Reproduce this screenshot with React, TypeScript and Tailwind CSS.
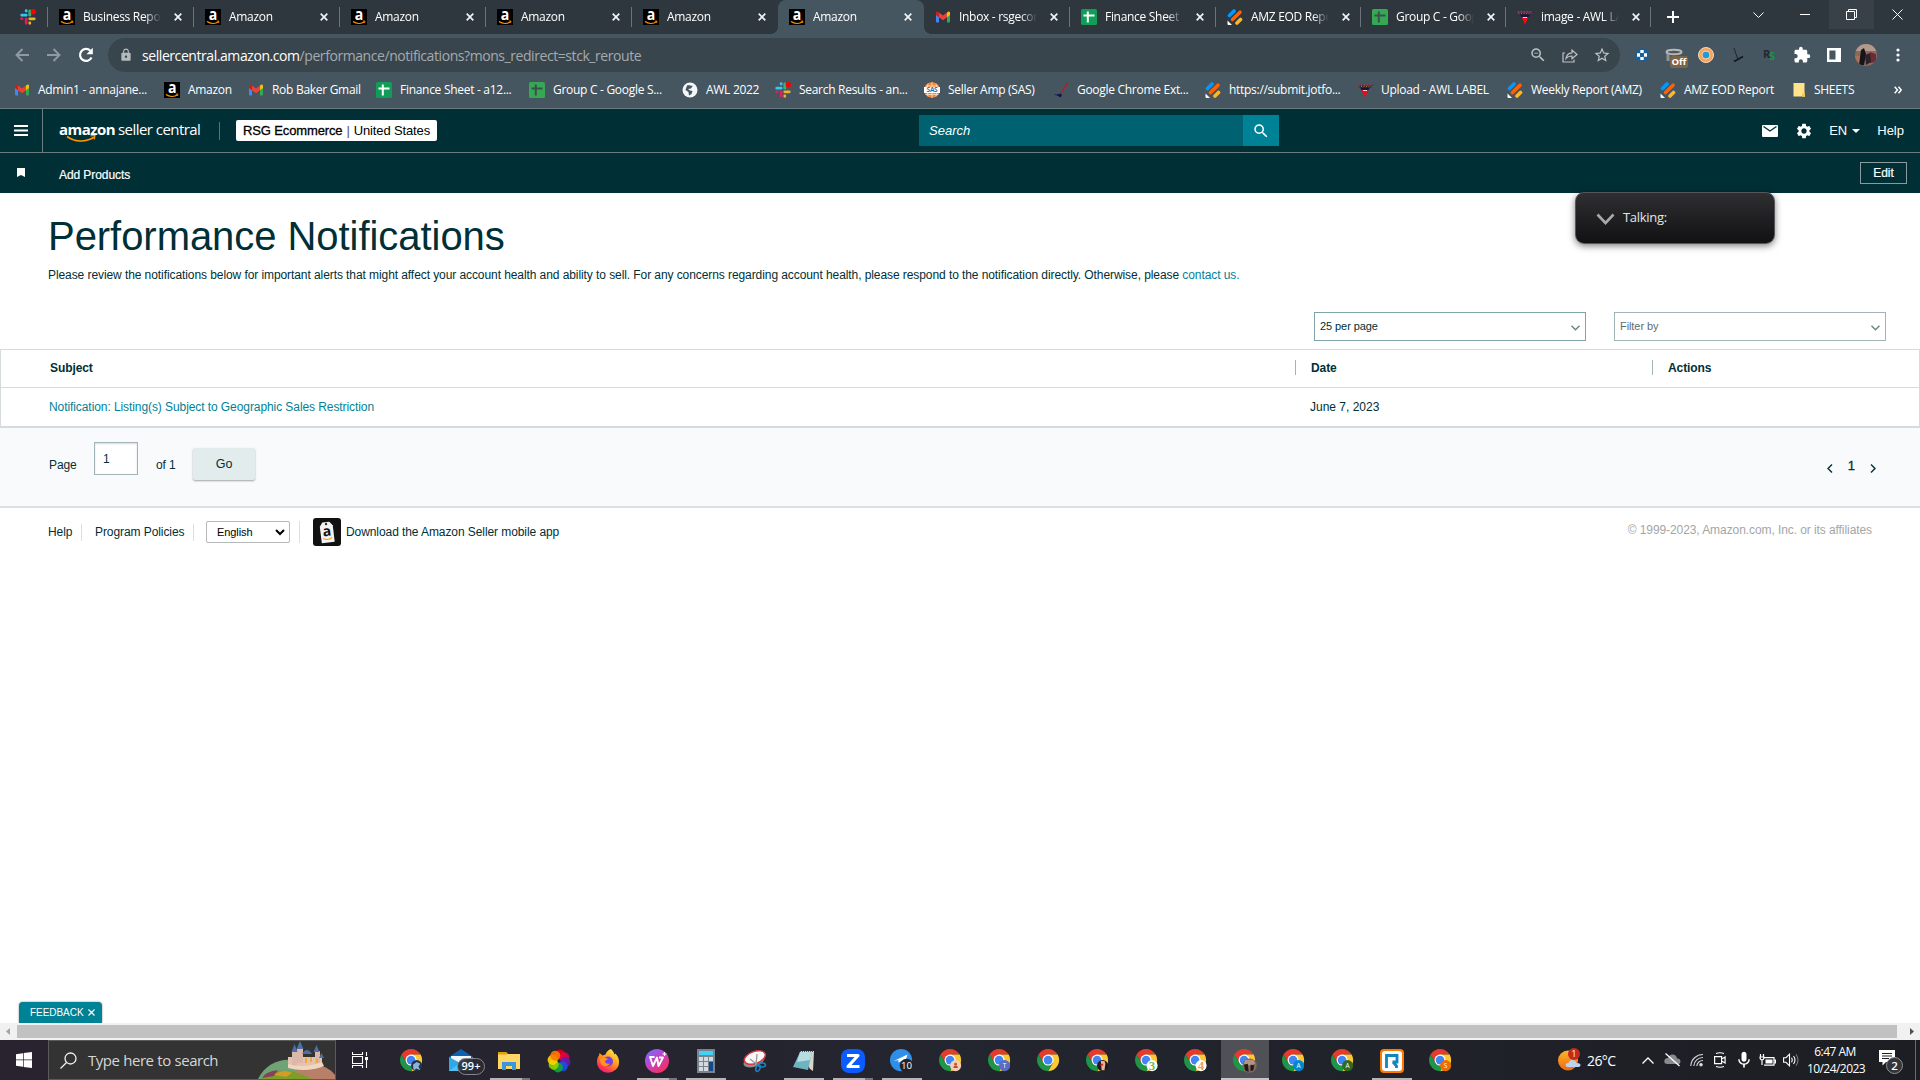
import type { ReactNode } from 'react';
import { MdExtension, MdSettings, MdLock, MdMic, MdSearch, MdStarBorder, MdZoomOut } from 'react-icons/md';

const segoe = "font-['Open_Sans',sans-serif]";

/* ---------- small brand icons ---------- */

const AmazonIcon = () => (
    <svg width="16" height="16" viewBox="0 0 16 16" className="shrink-0 overflow-visible">
        <rect width="16" height="16" fill="#000" />
        <g transform="translate(8 11) scale(.88 1)">
            <text textAnchor="middle" fontSize="16" fontWeight="700" fill="#fff" fontFamily="Open Sans">a</text>
        </g>
        <path d="M2 12.500c3.500 2.600 8.500 2.600 11.500.3" stroke="#f90" strokeWidth="1.200" fill="none" />
        <path d="M11.800 12.100l2.200-.1-.5 2" stroke="#f90" strokeWidth=".8" fill="none" />
    </svg>
);

const GmailIcon = () => (
    <svg width="16" height="16" viewBox="0 0 16 16" className="shrink-0">
        <path d="M1 4v8.500q0 1 1 1h2V6z" fill="#4285f4" />
        <path d="M15 4v8.500q0 1-1 1h-2V6z" fill="#34a853" />
        <path d="M12 3.500l1-.8q1-.6 2 .5V6l-3 2.300z" fill="#fbbc04" />
        <path d="M4 3.500l-1-.8q-1-.6-2 .5V6l3 2.300z" fill="#c5221f" />
        <path d="M4 3.500l4 3 4-3v4.800l-4 3-4-3z" fill="#ea4335" />
    </svg>
);

const SheetIcon = ({ dark = false }: { dark?: boolean }) => (
    <svg width="16" height="16" viewBox="0 0 16 16" className="shrink-0">
        <rect width="16" height="16" rx="1.500" fill={dark ? '#34a853' : '#0f9d58'} />
        <path d="M2.500 6.500h11M6.800 2.500v11" stroke={dark ? '#3c4f4d' : '#fff'} strokeWidth="2" />
    </svg>
);

const SlackIcon = () => (
    <svg width="16" height="16" viewBox="0 0 16 16" className="shrink-0" strokeWidth="2.800" strokeLinecap="round">
        <path d="M1.700 6.200h4.500M6.200 1.600v.5" stroke="#36c5f0" />
        <path d="M9.800 2v4.200" stroke="#2eb67d" />
        <path d="M9.800 9.800h4.500M9.800 13.900v.4" stroke="#ecb22e" />
        <path d="M6.200 9.800v4.500M1.600 9.800h.4" stroke="#e01e5a" />
        <circle cx="13.300" cy="2.800" r="2.700" fill="#f00" />
    </svg>
);

const JotformIcon = () => (
    <svg width="16" height="16" viewBox="0 0 16 16" className="shrink-0" strokeWidth="3.600" strokeLinecap="round">
        <path d="M2.500 6.500L7 2" stroke="#0099ff" />
        <path d="M5.500 10.500L13 3.200" stroke="#ff6100" />
        <path d="M10 14l3.500-3.500" stroke="#ffb629" />
        <path d="M.5 11.500v3.500q0 1 1 1h3.500z" fill="#fff" />
    </svg>
);

const AwlIcon = () => (
    <svg width="16" height="16" viewBox="0 0 16 16" className="shrink-0">
        <path d="M0 2.500h16l-1.500 3h-13z" fill="#3a2238" />
        <path d="M.5 3h15" stroke="#d0566f" strokeDasharray="2 1" />
        <path d="M1.500 4.500h13" stroke="#b59a3c" strokeWidth=".7" strokeDasharray="1 1.500" />
        <path d="M3 5.500h10l-2.500 4h-5z" fill="#17163f" />
        <path d="M4.500 8h7L8 15.500z" fill="#f00a14" />
        <path d="M6 8.500h4" stroke="#fff" strokeWidth=".8" />
    </svg>
);

const GlobeIcon = () => (
    <svg width="16" height="16" viewBox="0 0 16 16" className="shrink-0">
        <circle cx="8" cy="8" r="7.500" fill="#f4f6f7" />
        <path d="M5 3.500c3-1 4 1 6 0l-2 3-3 .5 2 1.500 2.500.5-1 3-2.500 1.500-.5-3.500-3-2z" fill="#455660" />
    </svg>
);

const SasIcon = () => (
    <svg width="16" height="16" viewBox="0 0 16 16" className="shrink-0 overflow-visible">
        <circle cx="8" cy="8" r="7.800" fill="#f58634" />
        <path d="M8 0v16M4 1.500q-2 6 0 13M12 1.500q2 6 0 13M1.500 4h13M1.500 12.500h13" stroke="#fde0c6" strokeWidth=".8" fill="none" />
        <rect x="0" y="5" width="16" height="6" fill="#fff" />
        <text x="8" y="10.200" textAnchor="middle" fontSize="6.500" fontWeight="700" fill="#1479b8" fontFamily="Open Sans">SAS</text>
    </svg>
);

const HockeyIcon = () => (
    <svg width="16" height="16" viewBox="0 0 16 16" className="shrink-0">
        <path d="M15 .5L7.500 12" stroke="#c4161c" strokeWidth="1.300" />
        <path d="M1 12l3 .5 3.500-1 1.500 1.500-1.500 2.500q-3-2-6-3z" fill="#15154e" />
    </svg>
);

const FolderIcon = () => (
    <svg width="13" height="16" viewBox="0 0 13 16" className="shrink-0">
        <path d="M.5 1h11v13.500h-11z" fill="#ffe38a" />
        <path d="M9 14.500v-3l3-1v4.500z" fill="#f3c94c" />
    </svg>
);

/* ---------- browser ---------- */

const tabs: { icon: ReactNode; title: string; active?: boolean; noSep?: boolean }[] = [
    { icon: <AmazonIcon />, title: 'Business Reports' },
    { icon: <AmazonIcon />, title: 'Amazon' },
    { icon: <AmazonIcon />, title: 'Amazon' },
    { icon: <AmazonIcon />, title: 'Amazon' },
    { icon: <AmazonIcon />, title: 'Amazon', noSep: true },
    { icon: <AmazonIcon />, title: 'Amazon', active: true, noSep: true },
    { icon: <GmailIcon />, title: 'Inbox - rsgecommerce' },
    { icon: <SheetIcon />, title: 'Finance Sheet - a12' },
    { icon: <JotformIcon />, title: 'AMZ EOD Report' },
    { icon: <SheetIcon dark />, title: 'Group C - Google' },
    { icon: <AwlIcon />, title: 'image - AWL LABEL' },
];

const TabClose = () => (
    <svg width="8" height="8" viewBox="0 0 8 8" className="shrink-0">
        <path d="M.7.7l6.600 6.600M7.300.7L.7 7.300" stroke="#f1f3f4" strokeWidth="1.700" />
    </svg>
);

const TabStrip = () => (
    <div className="flex h-[34px] shrink-0 bg-[#2d373d] text-white">
        <div className="flex w-12 items-center pl-5">
            <SlackIcon />
            <div className="ml-[11px] h-5 w-px bg-[#69757b]" />
        </div>
        {tabs.map((tab, i) => (
            <div key={i} className={`relative flex shrink-0 items-center pl-[11px] ${i < 8 ? 'w-[146px]' : 'w-[145px]'} ${tab.active ? 'rounded-t-lg bg-[#455660]' : ''}`}>
                {tab.active && (
                    <>
                        <div className="absolute bottom-0 -left-2 size-2 bg-[radial-gradient(circle_at_0_0,transparent_8px,#455660_8px)]" />
                        <div className="absolute -right-2 bottom-0 size-2 bg-[radial-gradient(circle_at_100%_0,transparent_8px,#455660_8px)]" />
                    </>
                )}
                {tab.icon}
                <span className="ml-2 w-[79px] overflow-hidden text-[12px] tracking-[-0.300px] whitespace-nowrap [mask-image:linear-gradient(to_right,#000_62px,transparent_78px)]">
                    {tab.title}
                </span>
                <span className="ml-[12px]"><TabClose /></span>
                {!tab.noSep && <div className="ml-auto h-5 w-px bg-[#69757b]" />}
            </div>
        ))}
        <div className="ml-4 flex items-center">
            <svg width="12" height="12" viewBox="0 0 12 12"><path d="M6 0v12M0 6h12" stroke="#fff" strokeWidth="2" /></svg>
        </div>
        <div className="ml-auto flex h-[29px]">
            <div className="flex w-[45px] items-center justify-center">
                <svg width="11" height="6" viewBox="0 0 11 6"><path d="M.5.5l5 5 5-5" stroke="#fff" fill="none" /></svg>
            </div>
            <div className="flex w-[48px] items-center justify-center">
                <div className="h-px w-[10px] bg-white" />
            </div>
            <div className="flex w-[45px] items-center justify-center bg-[#374147]">
                <svg width="11" height="11" viewBox="0 0 11 11"><path d="M.5 2.500h8v8h-8zM2.500 2.500v-2h8v8h-2" stroke="#fff" fill="none" /></svg>
            </div>
            <div className="flex w-[46px] items-center justify-center">
                <svg width="11" height="11" viewBox="0 0 11 11"><path d="M.5.5l10 10M10.500.5l-10 10" stroke="#fff" fill="none" /></svg>
            </div>
        </div>
    </div>
);

const extensions: ReactNode[] = [
    <svg width="16" height="16" viewBox="0 0 16 16">
        <circle cx="8" cy="8" r="7" fill="#1b5f94" />
        <path d="M8 3v3M8 10v3M3 8h3M10 8h3" stroke="#fff" strokeWidth="3.400" />
    </svg>,
    <div className="relative h-[18px] w-[18px]">
        <svg width="18" height="18" viewBox="0 0 18 18">
            <ellipse cx="9" cy="6" rx="7.500" ry="2.300" stroke="#b4b8ba" strokeWidth="2" fill="#555" />
            <path d="M3 8v7" stroke="#8d9497" strokeWidth="3" />
        </svg>
        <span className="absolute top-[10px] left-[5px] flex h-3 w-[18px] items-center justify-center rounded-[2px] bg-[#7d6347] text-[9.500px] leading-3 font-bold text-white">Off</span>
    </div>,
    <svg width="16" height="16" viewBox="0 0 16 16">
        <circle cx="8" cy="8" r="7.500" fill="#f7a35c" stroke="#fbd9b8" />
        <circle cx="8" cy="8" r="4.500" fill="#f9c79c" />
        <circle cx="8" cy="8" r="3.300" fill="#1b9ddb" />
    </svg>,
    <svg width="16" height="16" viewBox="0 0 16 16">
        <path d="M4 1l4 12" stroke="#20262a" />
        <path d="M4 14.500l9-5" stroke="#15191c" strokeWidth="2" />
    </svg>,
    <svg width="16" height="16" viewBox="0 0 16 16" className="overflow-visible">
        <text x="1" y="11" fontSize="11" fontWeight="700" fill="#22282c" fontFamily="Open Sans">R</text>
        <text x="7.500" y="13" fontSize="10" fontWeight="700" fill="#129a40" fontFamily="Open Sans">S</text>
    </svg>,
    <MdExtension size={18} />,
    <svg width="14" height="14" viewBox="0 0 14 14"><path d="M1.200 1.200h11.600v11.600H1.200z" fill="none" stroke="#fff" strokeWidth="2.400" /><path d="M8.500 1h4.500v12H8.500z" fill="#fff" /></svg>,
    <svg width="22" height="22" viewBox="0 0 22 22">
        <defs><clipPath id="av"><circle cx="11" cy="11" r="11" /></clipPath></defs>
        <g clipPath="url(#av)">
            <rect width="22" height="22" fill="#8a6a5c" />
            <path d="M0 0h22v7H0z" fill="#b49a8d" />
            <path d="M0 12h5l2 10H0z" fill="#a8735a" />
            <path d="M6 6l3-2 2 6-2 11H4z" fill="#17141a" />
            <path d="M15 8l6 2v8l-6 1z" fill="#6d2a38" />
            <path d="M10 11l5-2 1 9-5 3z" fill="#2c2326" />
        </g>
    </svg>,
    <svg width="4" height="14" viewBox="0 0 4 14" fill="#fff"><circle cx="2" cy="2" r="1.600" /><circle cx="2" cy="7" r="1.600" /><circle cx="2" cy="12" r="1.600" /></svg>,
];

const AddressBar = () => (
    <div className="flex h-[42px] shrink-0 items-center bg-[#455660] text-white">
        <div className="flex w-[108px] items-center pl-[15px]">
            <svg width="14" height="14" viewBox="0 0 14 14" stroke="#909ba1" strokeWidth="1.900" fill="none"><path d="M14 7H1.500M7.500 1L1.500 7l6 6" /></svg>
            <svg width="14" height="14" viewBox="0 0 14 14" stroke="#909ba1" strokeWidth="1.900" fill="none" className="ml-[18px]"><path d="M0 7h12.500M6.500 1l6 6-6 6" /></svg>
            <svg width="16" height="16" viewBox="0 0 16 16" className="ml-[17px]">
                <path d="M13.500 10.500A6 6 0 1 1 12.300 3.700" stroke="#fff" strokeWidth="2.200" fill="none" />
                <path d="M14.800.8v6.400H8.500z" fill="#fff" />
            </svg>
        </div>
        <div className="flex h-[34px] w-[1512px] items-center rounded-full bg-[#39454c] pr-[9px] pl-[11px]">
            <MdLock size={14} className="text-[#b3babd]" />
            <span className="ml-[9px] text-[14px] tracking-[-0.430px] whitespace-nowrap text-[#a4abaf]">
                <span className="text-white">sellercentral.amazon.com</span>/performance/notifications?mons_redirect=stck_reroute
            </span>
            <div className="ml-auto flex items-center text-[#bcc2c5]">
                <MdZoomOut size={18} />
                <svg width="16" height="16" viewBox="0 0 16 16" fill="none" stroke="currentColor" strokeWidth="1.200" className="ml-[15px]">
                    <path d="M3 6H1v9h11v-2.500M4 11.500c.5-4 3-5.500 6-5.700V3l5 4.500-5 4.200V9C7.500 9 5.500 9.600 4 11.500z" />
                </svg>
                <MdStarBorder size={18} className="ml-[15px]" />
            </div>
        </div>
        <div className="ml-[6px] flex">
            {extensions.map((icon, i) => (
                <div key={i} className="flex w-8 items-center justify-center">{icon}</div>
            ))}
        </div>
    </div>
);

const bookmarks: { icon: ReactNode; title: string; width: string }[] = [
    { icon: <GmailIcon />, title: 'Admin1 - annajane...', width: 'w-[150px]' },
    { icon: <AmazonIcon />, title: 'Amazon', width: 'w-[84px]' },
    { icon: <GmailIcon />, title: 'Rob Baker Gmail', width: 'w-[128px]' },
    { icon: <SheetIcon />, title: 'Finance Sheet - a12...', width: 'w-[153px]' },
    { icon: <SheetIcon dark />, title: 'Group C - Google S...', width: 'w-[153px]' },
    { icon: <GlobeIcon />, title: 'AWL 2022', width: 'w-[93px]' },
    { icon: <SlackIcon />, title: 'Search Results - an...', width: 'w-[149px]' },
    { icon: <SasIcon />, title: 'Seller Amp (SAS)', width: 'w-[129px]' },
    { icon: <HockeyIcon />, title: 'Google Chrome Ext...', width: 'w-[152px]' },
    { icon: <JotformIcon />, title: 'https://submit.jotfo...', width: 'w-[152px]' },
    { icon: <AwlIcon />, title: 'Upload - AWL LABEL', width: 'w-[150px]' },
    { icon: <JotformIcon />, title: 'Weekly Report (AMZ)', width: 'w-[153px]' },
    { icon: <JotformIcon />, title: 'AMZ EOD Report', width: 'w-[133px]' },
    { icon: <FolderIcon />, title: 'SHEETS', width: 'w-[96px]' },
];

const BookmarkBar = () => (
    <div className="flex h-8 shrink-0 items-center bg-[#455660] pb-[4px] pl-[14px] text-[12px] tracking-[-0.290px] text-white">
        {bookmarks.map((b) => (
            <div key={b.title} className={`flex shrink-0 items-center gap-2 whitespace-nowrap ${b.width}`}>
                {b.icon}
                <span>{b.title}</span>
            </div>
        ))}
        <svg width="8" height="8" viewBox="0 0 8 8" fill="none" stroke="#fff" strokeWidth="1.500" className="ml-[5px]">
            <path d="M.7.7L3.500 4 .7 7.300M4.500.7L7.300 4 4.500 7.300" />
        </svg>
    </div>
);

/* ---------- seller central ---------- */

const SellerHeader = () => (
    <header className="shrink-0 bg-[#002f36] text-white">
        <div className="flex h-[45px] items-center border-t border-b border-[#6b7d81]">
            <div className="flex h-full w-[43px] items-center border-r border-[#6b7d81] pl-[14px]">
                <svg width="14" height="11" viewBox="0 0 14 11"><path d="M0 1h14M0 5.500h14M0 10h14" stroke="#fff" strokeWidth="1.800" /></svg>
            </div>
            <div className={`relative ml-4 flex w-[143px] items-baseline pb-1 leading-5 whitespace-nowrap ${segoe}`}>
                <span className="w-[59px] text-[15px] font-bold tracking-[-0.550px]">amazon</span>
                <span className="text-[15px] tracking-[-0.550px]">seller central</span>
                <svg width="31" height="8" viewBox="0 0 31 8" className="absolute top-[16px] left-[7px]" fill="none" stroke="#f90">
                    <path d="M1 1.500c8 5.500 18 6 27 .8" strokeWidth="1.600" />
                    <path d="M24.500.8l4.500-.3-.8 4" strokeWidth="1.200" />
                </svg>
            </div>
            <div className="ml-[17px] h-[18px] w-px bg-[#5c7377]" />
            <div className="ml-4 flex h-[21px] w-[201px] items-center rounded-[2px] bg-white pl-[7px] text-[13px] tracking-[-0.130px] whitespace-nowrap text-black">
                <span className="[-webkit-text-stroke:0.300px_#000]">RSG Ecommerce</span>
                <span className="mx-[4px] text-[#555]">|</span>
                <span>United States</span>
            </div>
            <div className="ml-[482px] flex h-[31px]">
                <div className="flex w-[324px] items-center bg-[#006170] pl-[10px] text-[13px] italic">Search</div>
                <div className="flex w-9 items-center justify-center bg-[#008296]">
                    <MdSearch size={18} />
                </div>
            </div>
            <div className="ml-auto flex items-center text-[13px]">
                <svg width="16" height="12" viewBox="0 0 16 12">
                    <rect width="16" height="12" rx="1" fill="#fff" />
                    <path d="M1.500 1.500L8 6l6.500-4.500" stroke="#002f36" strokeWidth="1.400" fill="none" />
                </svg>
                <MdSettings size={18} className="ml-[17px]" />
                <span className="ml-[16px]">EN</span>
                <svg width="8" height="4" viewBox="0 0 8 4" className="ml-[5px]"><path d="M0 0h8L4 4z" fill="#fff" /></svg>
                <span className="mr-4 ml-[17px]">Help</span>
            </div>
        </div>
        <div className="flex h-10 items-center">
            <svg width="8" height="9" viewBox="0 0 8 9" className="mb-[2px] ml-[17px]"><path d="M0 0h8v9L4 7 0 9z" fill="#fff" /></svg>
            <span className="mt-[3px] ml-[34px] text-[12px] tracking-[-0.080px] [-webkit-text-stroke:0.200px_#fff]">Add Products</span>
            <div className="mr-[13px] ml-auto flex h-[22px] w-[47px] items-center justify-center border border-[#8b9a9d] text-[12px] [-webkit-text-stroke:0.200px_#fff]">Edit</div>
        </div>
    </header>
);

const SelectBox = ({ label, className }: { label: string; className: string }) => (
    <div className={`flex h-[29px] w-[272px] items-center justify-between border bg-white pr-[5px] pl-[5px] text-[11px] ${className}`}>
        <span>{label}</span>
        <svg width="9" height="6" viewBox="0 0 9 6" className="mt-[2px]"><path d="M.5.7l4 4 4-4" stroke="#6f8185" strokeWidth="1.400" fill="none" /></svg>
    </div>
);

const Notifications = () => (
    <main className="shrink-0 text-[12px] tracking-[-0.080px] text-[#002f36]">
        <div className="h-[119px] pt-[20px] pl-12">
            <h1 className="text-[40px] leading-[46px] tracking-[-0.050px]">Performance Notifications</h1>
            <p className="mt-[9px] leading-[14px]">
                Please review the notifications below for important alerts that might affect your account health and ability to sell. For any concerns regarding account health, please respond to the notification directly. Otherwise, please <a className="text-[#008296]">contact us.</a>
            </p>
        </div>
        <div className="flex h-[37px] justify-end gap-7 pr-[34px]">
            <SelectBox label="25 per page" className="border-[#7fa5ab]" />
            <SelectBox label="Filter by" className="border-[#a2b4b7] text-[#5f6d70]" />
        </div>
        <div className="border border-b-2 border-[#d5dbdd]">
            <div className="flex h-[38px] items-center border-b border-[#d5dbdd] pb-[2px] font-bold">
                <div className="w-[1294px] pl-[49px]">Subject</div>
                <div className="flex w-[357px] items-center"><span className="mr-[15px] h-[15px] w-px bg-[#a2b4b7]" />Date</div>
                <div className="flex items-center"><span className="mr-[15px] h-[15px] w-px bg-[#a2b4b7]" />Actions</div>
            </div>
            <div className="flex h-[38px] items-center">
                <a className="w-[1309px] pl-12 text-[#008296]">Notification: Listing(s) Subject to Geographic Sales Restriction</a>
                <span className="tracking-normal">June 7, 2023</span>
            </div>
        </div>
        <div className="flex h-[80px] items-start border-b-2 border-[#dde1e4] bg-[#f9fafc] pl-[49px]">
            <span className="mt-[30px] w-[45px] leading-[14px]">Page</span>
            <div className="mt-[14px] flex h-[33px] w-11 items-center border border-[#a2b4b7] bg-white pl-[8px] shadow-[inset_0_1px_2px_rgba(0,0,0,0.15)]">1</div>
            <span className="mt-[30px] ml-[18px] w-[37px] leading-[14px]">of 1</span>
            <button className="mt-[20px] h-8 w-[62px] rounded-[2px] bg-[#e3eced] text-[12.500px] shadow-[0_1px_2px_rgba(0,0,0,0.35)]">Go</button>
            <div className="mt-[30px] mr-[44px] ml-auto flex items-center leading-[16px]">
                <svg width="6" height="9" viewBox="0 0 6 9" className="mt-[4px]"><path d="M5 .5l-4 4 4 4" stroke="#002f36" strokeWidth="1.400" fill="none" /></svg>
                <span className="mx-[15px] text-[13px] [-webkit-text-stroke:0.300px_#002f36]">1</span>
                <svg width="6" height="9" viewBox="0 0 6 9" className="mt-[4px]"><path d="M1 .5l4 4-4 4" stroke="#002f36" strokeWidth="1.400" fill="none" /></svg>
            </div>
        </div>
        <footer className="flex h-[48px] items-center pl-12">
            <span className="w-[33px]">Help</span>
            <span className="h-[17px] w-px bg-[#dcdfe0]" />
            <span className="w-[111px] pl-[13px] whitespace-nowrap">Program Policies</span>
            <span className="h-[17px] w-px bg-[#dcdfe0]" />
            <div className="ml-3 flex h-[22px] w-[84px] items-center justify-between rounded-[2px] border border-[#b5b9ba] pr-[4px] pl-[10px] text-[11px] text-black">
                English
                <svg width="10" height="7" viewBox="0 0 10 7"><path d="M1 1l4 4 4-4" stroke="#000" strokeWidth="2" fill="none" /></svg>
            </div>
            <span className="ml-[9px] h-[22px] w-px bg-[#dcdfe0]" />
            <svg width="28" height="28" viewBox="0 0 28 28" className="ml-[13px]">
                <rect width="28" height="28" rx="3" fill="#111" />
                <g transform="rotate(-7 14 14)">
                    <path d="M10.500 4h7L20.500 8v16.500h-13V8z" fill="#f4f4f4" />
                    <circle cx="14" cy="6" r="1.200" fill="#333" />
                    <text x="14" y="18" textAnchor="middle" fontSize="14" fontWeight="700" fill="#111" fontFamily="Open Sans">a</text>
                    <path d="M9.500 20q4.500 3 9 0" stroke="#f90" strokeWidth="1.200" fill="none" />
                </g>
            </svg>
            <span className="ml-[5px]">Download the Amazon Seller mobile app</span>
            <span className="mr-12 mb-[5px] ml-auto text-[#a3a6a7]">© 1999-2023, Amazon.com, Inc. or its affiliates</span>
        </footer>
    </main>
);

const TalkingPanel = () => (
    <div className={`absolute top-[192px] left-[1575px] flex h-[52px] w-[200px] items-center rounded-[9px] border border-[#55555a] bg-linear-to-b from-[#2f2f32] to-[#121214] pl-5 text-[13px] text-[#e4e4e4] shadow-[0_2px_7px_rgba(0,0,0,0.5)] ${segoe}`}>
        <svg width="19" height="12" viewBox="0 0 19 12" className="mt-[2px]"><path d="M1.500 1.500l8 8.500 8-8.500" stroke="#a8a8aa" strokeWidth="2.600" fill="none" /></svg>
        <span className="ml-2 tracking-[-0.300px]">Talking:</span>
    </div>
);

/* ---------- taskbar ---------- */

const ChromeIcon = ({ children }: { children?: ReactNode }) => (
    <svg width="26" height="26" viewBox="0 0 26 26">
        <path d="M12 12V6h10.390A12 12 0 0 0 1.610 6L6.800 15z" fill="#e33b2e" />
        <path d="M12 12l5.200 3L12 24A12 12 0 0 0 22.390 6H12z" fill="#fcc934" />
        <path d="M12 12l-5.200 3L1.610 6A12 12 0 0 0 12 24l5.200-9z" fill="#1e9547" />
        <circle cx="12" cy="12" r="6" fill="#fff" />
        <circle cx="12" cy="12" r="4.700" fill="#4285f4" />
        {children}
    </svg>
);

const Badge = ({ color, letter }: { color: string; letter: string }) => (
    <ChromeIcon>
        <circle cx="18" cy="18" r="6" fill={color} />
        <text x="18" y="20.600" textAnchor="middle" fontSize="7" fill="#fff" fontFamily="Open Sans">{letter}</text>
    </ChromeIcon>
);

const NumberBadge = ({ color, digit }: { color: string; digit: string }) => (
    <ChromeIcon>
        <circle cx="18.500" cy="18" r="6" fill="#fff" />
        <text x="18.500" y="22.700" textAnchor="middle" fontSize="14" fontWeight="700" fill={color} fontFamily="Liberation Serif">{digit}</text>
    </ChromeIcon>
);

const petals = ['#e8000d', '#e5004f', '#5a1fb0', '#1f4fe0', '#13a538', '#8fd400', '#ffd400', '#ff7a00'];

const apps: { icon: ReactNode; line?: 'full' | 'stack' | 'active' }[] = [
    {
        icon: (
            <ChromeIcon>
                <circle cx="18" cy="18" r="6" fill="#20344f" />
                <path d="M14 17l4-3 4 2-2 3 2 4-4-2-3 2z" fill="#8fb0d8" />
                <path d="M14 21l3-2 3 3" stroke="#d8b35a" fill="none" />
            </ChromeIcon>
        ),
    },
    {
        icon: (
            <div className="relative h-[26px] w-6">
                <svg width="24" height="26" viewBox="0 0 24 26">
                    <path d="M0 9l12-8 12 8v13H0z" fill="#0d63b0" />
                    <path d="M2 8h20v9H2z" fill="#f3f7fb" />
                    <path d="M0 9l12 6.500L24 9v14H0z" fill="#2fa8ea" />
                    <path d="M0 23L12 14l12 9z" fill="#50c0f5" />
                </svg>
                <span className="absolute top-[10px] left-[8px] flex h-[17px] w-7 items-center justify-center rounded-full border border-[#85878c] bg-[#2b2c33]/90 text-[11px] leading-4 font-semibold text-white">99+</span>
            </div>
        ),
    },
    {
        icon: (
            <svg width="22" height="20" viewBox="0 0 22 20">
                <path d="M0 1h8l2 2h12v15H0z" fill="#ffd766" />
                <path d="M0 1h8l1.500 2.500H0z" fill="#e0a106" />
                <path d="M4 11h14v8h-4v-4H8v4H4z" fill="#3b97dd" />
            </svg>
        ),
        line: 'stack',
    },
    {
        icon: (
            <svg width="24" height="24" viewBox="0 0 24 24">
                {petals.map((color, i) => (
                    <circle key={color} cx="12" cy="5.500" r="5" fill={color} fillOpacity=".9" transform={`rotate(${i * 45 + 10} 12 12)`} />
                ))}
            </svg>
        ),
    },
    {
        icon: (
            <svg width="24" height="24" viewBox="0 0 24 24">
                <defs>
                    <linearGradient id="fox" x1=".8" y1="0" x2=".2" y2="1">
                        <stop offset="0" stopColor="#fff044" />
                        <stop offset=".45" stopColor="#ff9a1f" />
                        <stop offset=".8" stopColor="#ff3750" />
                        <stop offset="1" stopColor="#e31587" />
                    </linearGradient>
                </defs>
                <path d="M15 0c2 2 3 3.500 3.300 5.500l1-1C22 7 23.300 10 23 13.500A11 10.500 0 0 1 1 13c0-3 .8-5 2-6.500L3.500 4l3 2.500 3-1c1-3 3-4.500 5.500-5.500z" fill="url(#fox)" />
                <circle cx="12" cy="12.500" r="5" fill="#7542e5" />
                <path d="M4 9.500c3-2 6-1 8 .5l-3 2c0 2 2 3.500 5 2.500-2 3.500-8 4-9.500-1z" fill="#ff9421" />
            </svg>
        ),
    },
    {
        icon: (
            <svg width="24" height="24" viewBox="0 0 24 24">
                <defs>
                    <linearGradient id="wps" x1="0" y1="0" x2=".8" y2="1">
                        <stop offset="0" stopColor="#5b7bff" />
                        <stop offset=".4" stopColor="#b34bd6" />
                        <stop offset="1" stopColor="#ff2a55" />
                    </linearGradient>
                </defs>
                <circle cx="12" cy="12" r="12" fill="url(#wps)" />
                <path d="M9.500 8H5l3 9L12 8.500l1.500 8.500L18 8.500h-4" stroke="#fff" strokeWidth="1.900" fill="none" strokeLinejoin="round" />
                <path d="M19.500 3v4M17.500 5h4" stroke="#fff" strokeWidth="1.200" />
            </svg>
        ),
        line: 'stack',
    },
    {
        icon: (
            <svg width="18" height="24" viewBox="0 0 18 24" className="ml-[3px]">
                <rect width="18" height="24" fill="#78838c" />
                <rect x="2" y="2" width="14" height="4" fill="#3fd3fb" />
                <path d="M2 8h4v4H2zM7 8h4v4H7zM12 8h4v4h-4zM2 13h4v4H2zM7 13h4v4H7zM2 18h4v4H2zM7 18h4v4H7z" fill="#d5dade" />
                <path d="M12 13h4v9h-4z" fill="#124a8d" />
            </svg>
        ),
        line: 'full',
    },
    {
        icon: (
            <svg width="24" height="24" viewBox="0 0 24 24">
                <ellipse cx="11" cy="12" rx="11" ry="5.500" fill="#8d9094" transform="rotate(-20 11 12)" />
                <ellipse cx="12" cy="8.500" rx="11" ry="6" fill="#f8f8f8" stroke="#d9363e" strokeWidth="1.500" transform="rotate(-20 12 9)" />
                <path d="M14 5l-1 11M7 10l9 7" stroke="#999" strokeWidth="1.300" />
                <ellipse cx="19" cy="16" rx="3.500" ry="2" stroke="#1784c7" strokeWidth="1.600" fill="none" />
                <ellipse cx="15" cy="19" rx="2" ry="3.500" stroke="#1784c7" strokeWidth="1.600" fill="none" transform="rotate(20 15 19)" />
            </svg>
        ),
    },
    {
        icon: (
            <svg width="24" height="24" viewBox="0 0 24 24">
                <path d="M8 2h14l-1 20-3-2z" fill="#d8d6c8" />
                <path d="M8 3h12l-4 18-15-3z" fill="#6eb4c0" />
                <path d="M8 3h12l-2 8L5 13z" fill="#b7dde2" />
                <path d="M8 2.500h13" stroke="#555" strokeDasharray="1 1" />
            </svg>
        ),
        line: 'full',
    },
    {
        icon: (
            <svg width="24" height="24" viewBox="0 0 24 24">
                <rect width="24" height="24" rx="8" fill="#0b5cff" />
                <path d="M6 6.500h11L7 17.500h11.500" stroke="#fff" strokeWidth="3.200" fill="none" strokeLinejoin="round" />
            </svg>
        ),
        line: 'stack',
    },
    {
        icon: (
            <svg width="26" height="26" viewBox="0 0 26 26">
                <circle cx="12" cy="12" r="12" fill="#2f8fe8" />
                <path d="M4 13L19 6l-3 9-4-2-3 2v-3z" fill="#fff" />
                <circle cx="18" cy="18" r="7.500" fill="#23242b" />
                <text x="18" y="22" textAnchor="middle" fontSize="10.500" fill="#fff" fontFamily="Open Sans">10</text>
            </svg>
        ),
        line: 'full',
    },
    {
        icon: (
            <ChromeIcon>
                <circle cx="18" cy="18" r="6" fill="#f7cdb5" />
                <circle cx="18" cy="16.500" r="1.500" fill="#b5532f" />
                <path d="M15.500 20.500q0-2.500 2.500-2.500t2.500 2.500z" fill="#b5532f" />
            </ChromeIcon>
        ),
    },
    { icon: <Badge color="#5c6bc0" letter="T" /> },
    { icon: <ChromeIcon /> },
    {
        icon: (
            <ChromeIcon>
                <circle cx="18" cy="18" r="6" fill="#231718" />
                <path d="M16 13h4l1 3-1 7h-3z" fill="#e3b79d" />
                <path d="M15.500 16h3v2h-3z" fill="#c22" />
            </ChromeIcon>
        ),
    },
    { icon: <NumberBadge color="#6cc04a" digit="3" /> },
    { icon: <NumberBadge color="#f2a03d" digit="4" /> },
    {
        icon: (
            <ChromeIcon>
                <circle cx="18" cy="18" r="7.800" fill="#83685d" />
                <path d="M13 12h9l2 4-6 2-6-2z" fill="#b09587" />
                <path d="M12 17l4-1 1 9-4-2zM19 17l4 1-1 5-3 1z" fill="#21181b" />
            </ChromeIcon>
        ),
        line: 'active',
    },
    { icon: <Badge color="#0288d1" letter="A" /> },
    { icon: <Badge color="#33691e" letter="A" /> },
    {
        icon: (
            <svg width="24" height="24" viewBox="0 0 24 24">
                <rect width="24" height="24" rx="4" fill="#ff7a00" />
                <rect x="2" y="2" width="20" height="20" rx="3" fill="#fff" />
                <path d="M6.500 19V6.500h10.500v6.500h-4.500M16.500 19v-2l-3.500-4" stroke="#0f86bd" strokeWidth="2.800" fill="none" />
            </svg>
        ),
        line: 'full',
    },
    { icon: <Badge color="#ef6c00" letter="S" /> },
];

const Castle = () => (
    <svg width="77" height="38" viewBox="0 0 77 38" className="ml-auto">
        <path d="M0 38C8 22 24 16 40 20l20 18z" fill="#6fa274" />
        <path d="M32 38c4-10 18-17 30-14 8 3 12 6 15 10v4z" fill="#b98069" />
        <path d="M4 38c8-10 28-12 50 0z" fill="#7d9e27" />
        <path d="M4 37c4-6 10-7 16-8l-4 6z" fill="#87405a" />
        <path d="M16 34c6-5 14-5 18-2l-6 4z" fill="#cf9d28" />
        <path d="M30 16h34v10q-16 5-34 0z" fill="#e4c3ae" />
        <path d="M34 10h5v15h-5zM39 8h6v14h-6zM57 10h5v13h-5z" fill="#dcb8ab" />
        <path d="M33.500 11l3-8 3 8zM38.500 8L42 0l3.500 8zM55.500 11L58.500 4l3 7zM61 17l2.500-5 2.500 5zM44 13q5-8 10 0z" fill="#4e6fa5" />
        <path d="M47 17h2v5h-2zM52 16h2v5h-2zM58 18h2v4h-2z" fill="#f2a63b" />
        <path d="M30 23q16 5 34-2l2 4q-18 7-36 2z" fill="#f0d5c0" />
    </svg>
);

const lineClass = {
    full: 'absolute bottom-0 left-1 h-[2px] w-10 bg-[#b5b5b8]',
    stack: 'absolute bottom-0 left-1 h-[2px] w-10 border-r-8 border-[#77777b] bg-[#b5b5b8]',
    active: 'absolute bottom-0 left-0 h-[2px] w-12 bg-[#c4c4c6]',
};

const Taskbar = () => (
    <div className={`flex h-10 shrink-0 items-stretch bg-linear-to-r from-[#29232f] via-[#23252f] to-[#1d1e23] text-white ${segoe}`}>
        <div className="flex w-12 items-center justify-center">
            <svg width="16" height="16" viewBox="0 0 16 16" fill="#fff"><path d="M0 2.200l7-1v6.300H0zM7.700 1.100L16 0v7.500H7.700zM0 8.200h7v6.600l-7-1zM7.700 8.200H16V16l-8.300-1.100z" /></svg>
        </div>
        <div className="flex w-72 items-center border border-[#5b5b5b] bg-[#333] pl-[11px]">
            <svg width="17" height="17" viewBox="0 0 17 17" fill="none" stroke="#f0f0f0" strokeWidth="1.300"><circle cx="10.500" cy="6.500" r="5.500" /><path d="M6.500 10.500L.5 16.500" /></svg>
            <span className="ml-[11px] text-[15px] tracking-[-0.500px] whitespace-nowrap text-[#d6d6d6] [word-spacing:0.500px]">Type here to search</span>
            <Castle />
        </div>
        <div className="flex w-[51px] items-center pl-4">
            <svg width="17" height="16" viewBox="0 0 17 16" fill="none" stroke="#fff" strokeWidth="1.100">
                <path d="M.5 0v2.500h10V0M.5 16v-2.500h10V16M.5 4.500h10v7H.5zM14.500 0v4M14.500 8v8" />
                <path d="M13 5h3v3h-3z" fill="#fff" stroke="none" />
            </svg>
        </div>
        {apps.map((app, i) => (
            <div key={i} className="flex w-[49px] shrink-0 pl-px">
                <div className={`relative flex w-12 items-center pt-[1px] ${app.line === 'active' ? 'bg-[#505156]' : ''}`}>
                    <div className="ml-3 flex w-6">{app.icon}</div>
                    {app.line && <div className={lineClass[app.line]} />}
                </div>
            </div>
        ))}
        <div className="ml-auto flex items-center">
            <svg width="23" height="24" viewBox="0 0 23 24">
                <defs><linearGradient id="sun" x1="0" y1="0" x2="0" y2="1"><stop offset="0" stopColor="#fbb829" /><stop offset="1" stopColor="#f2660e" /></linearGradient></defs>
                <circle cx="10" cy="12.500" r="10" fill="url(#sun)" />
                <path d="M10 19q-2.500 0-2.500-2t3-2q1-3 4-3t4 3q4 0 4 2t-3 2z" fill="#b9d5f3" />
                <circle cx="16" cy="6" r="6" fill="#c42b1c" />
                <text x="16" y="9" textAnchor="middle" fontSize="8.500" fill="#fff" fontFamily="Open Sans">1</text>
            </svg>
            <span className="ml-[6px] w-[55px] text-[14px] tracking-[-0.600px]">26°C</span>
            <svg width="12" height="7" viewBox="0 0 12 7"><path d="M.5 6.500L6 1l5.500 5.500" stroke="#fff" strokeWidth="1.300" fill="none" /></svg>
            <svg width="17" height="14" viewBox="0 0 17 14" className="ml-[10px]">
                <path d="M3.500 11Q0 11 .3 8T4 5q1.500-4 5-3.500T13 5.500q3.500 0 3.500 3T13.500 11z" fill="#8a8b8f" />
                <path d="M1.500.5l14 12.500" stroke="#fff" strokeWidth="1.300" />
            </svg>
            <svg width="14" height="14" viewBox="0 0 14 14" className="ml-[9px]" fill="none" stroke="#d0d0d2" strokeWidth="1.200">
                <path d="M.8 13A12 12 0 0 1 13 1.500M3.800 13A9 9 0 0 1 13 4.500M6.800 13A6 6 0 0 1 13 7.500" />
                <circle cx="11" cy="11.700" r="1.200" fill="#fff" />
            </svg>
            <svg width="12" height="16" viewBox="0 0 12 16" className="ml-[10px]" fill="none" stroke="#fff" strokeWidth="1.200">
                <path d="M2 1.500Q6 0 10 1.500M2 14.500q4 1.500 8 0M.6 4.600h7v7h-7zM7.600 7l3.500-2v6l-3.500-2z" />
            </svg>
            <MdMic size={20} className="ml-[8px]" />
            <svg width="17" height="13" viewBox="0 0 17 13" className="ml-[5px]" fill="none" stroke="#fff" strokeWidth="1.200">
                <path d="M5.500 3.600h9.500v7.500H5M15 6h1.500v3H15M.5 3h5M1.500 0v3M4.500 0v3M1 3q0 3 2 3t2-3M3 6v5" />
                <path d="M6.500 5.500h7v4h-7z" fill="#fff" stroke="none" />
            </svg>
            <svg width="17" height="14" viewBox="0 0 17 14" className="ml-[7px]" fill="none" stroke="#fff" strokeWidth="1.100">
                <path d="M.6 4.700h2.400l3.500-3.500v11.600L3 9.300H.6zM8.500 4.800q1.500 2.200 0 4.400M10.500 3q3 4 0 8" />
                <path d="M13 1.200q4 5.800 0 11.600" stroke="#77787c" />
            </svg>
            <div className="ml-[5px] w-[62px] text-center text-[12px] leading-[17px] tracking-[-0.550px] whitespace-nowrap">
                <div className="-ml-[2px]">6:47 AM</div>
                <div>10/24/2023</div>
            </div>
            <svg width="25" height="25" viewBox="0 0 25 25" className="mt-1 ml-[12px]">
                <path d="M0 0h16v12H7l-3.500 3.500V12H0z" fill="#fff" />
                <path d="M3 3.500h10M3 6h10M3 8.500h7" stroke="#1e1f24" />
                <circle cx="15.500" cy="15.500" r="8" fill="#34353a" stroke="#909196" />
                <text x="15.500" y="19.700" textAnchor="middle" fontSize="11.500" fontWeight="600" fill="#fff" fontFamily="Open Sans">2</text>
            </svg>
            <div className="mr-1 ml-[11px] h-10 w-px bg-[#6b6c70]" />
        </div>
    </div>
);

export default function App() {
    return (
        <div className="relative flex h-[1080px] w-[1920px] flex-col overflow-hidden bg-white font-['Liberation_Sans',Arial,sans-serif]">
            <div className={`shrink-0 ${segoe}`}>
                <TabStrip />
                <AddressBar />
                <BookmarkBar />
            </div>
            <SellerHeader />
            <Notifications />
            <div className="mt-auto shrink-0 pl-[19px]">
                <div className="flex h-[21px] w-[83px] items-center rounded-t-[4px] bg-[#008296] pl-[11px] text-[10px] tracking-[-0.050px] text-white shadow-[0_0_2px_rgba(0,0,0,0.5)]">
                    FEEDBACK
                    <svg width="7" height="7" viewBox="0 0 7 7" className="ml-[4px]"><path d="M.5.5l6 6M6.500.5l-6 6" stroke="#fff" strokeWidth="1.200" /></svg>
                </div>
            </div>
            <div className="flex h-[17px] shrink-0 items-center bg-[#f1f1f1] px-[6px]">
                <svg width="4" height="7" viewBox="0 0 4 7"><path d="M4 0v7L0 3.500z" fill="#a3a3a3" /></svg>
                <div className="mr-[13px] ml-[7px] h-[13px] flex-1 bg-[#c1c1c1]" />
                <svg width="4" height="7" viewBox="0 0 4 7"><path d="M0 0v7l4-3.500z" fill="#505050" /></svg>
            </div>
            <Taskbar />
            <TalkingPanel />
        </div>
    );
}
